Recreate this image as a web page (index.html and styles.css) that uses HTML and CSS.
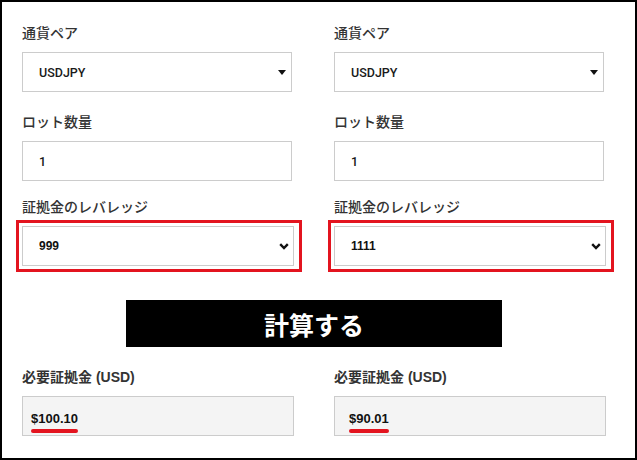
FILE: index.html
```html
<!DOCTYPE html>
<html lang="ja">
<head>
    <meta charset="UTF-8">
    <meta name="viewport" content="width=device-width, initial-scale=1.0">
    <title>証拠金計算</title>
    <link rel="stylesheet" href="styles.css">
</head>
<body>

    <div class="calc">
        <!-- 通貨ペア -->
        <div class="row">
            <div class="field">
                <label class="label">通貨ペア</label>
                <div class="select-wrap">
                    <select class="select"><option>USDJPY</option></select>
                    <svg class="arrow-tri" width="8" height="5" viewBox="0 0 8 5"><polygon points="0,0 8,0 4,5" fill="#111"/></svg>
                </div>
            </div>
            <div class="field">
                <label class="label">通貨ペア</label>
                <div class="select-wrap">
                    <select class="select"><option>USDJPY</option></select>
                    <svg class="arrow-tri" width="8" height="5" viewBox="0 0 8 5"><polygon points="0,0 8,0 4,5" fill="#111"/></svg>
                </div>
            </div>
        </div>

        <!-- ロット数量 -->
        <div class="row row-lot">
            <div class="field">
                <label class="label">ロット数量</label>
                <input class="input" type="text" value="1">
            </div>
            <div class="field">
                <label class="label">ロット数量</label>
                <input class="input" type="text" value="1">
            </div>
        </div>

        <!-- レバレッジ -->
        <div class="row row-leverage">
            <div class="field">
                <label class="label">証拠金のレバレッジ</label>
                <div class="highlight">
                    <div class="select-wrap">
                        <select class="select select-bold"><option>999</option></select>
                        <svg class="arrow-chev" width="10" height="7" viewBox="0 0 10 7"><polyline points="1.2,1.2 5,5 8.8,1.2" fill="none" stroke="#111" stroke-width="2.4"/></svg>
                    </div>
                </div>
            </div>
            <div class="field">
                <label class="label">証拠金のレバレッジ</label>
                <div class="highlight">
                    <div class="select-wrap">
                        <select class="select select-bold"><option>1111</option></select>
                        <svg class="arrow-chev" width="10" height="7" viewBox="0 0 10 7"><polyline points="1.2,1.2 5,5 8.8,1.2" fill="none" stroke="#111" stroke-width="2.4"/></svg>
                    </div>
                </div>
            </div>
        </div>

        <button class="button">計算する</button>

        <!-- 結果 -->
        <div class="row row-result">
            <div class="field">
                <label class="label label-strong">必要証拠金 (USD)</label>
                <div class="output"><span class="amount">$100.10</span></div>
            </div>
            <div class="field">
                <label class="label label-strong">必要証拠金 (USD)</label>
                <div class="output output-right"><span class="amount">$90.01</span></div>
            </div>
        </div>
    </div>

</body>
</html>
```

FILE: styles.css
```css
body {
    margin: 0;
    background-color: #fff;
    font-family: "Liberation Sans", "Noto Sans CJK JP", sans-serif;
}

/* 外枠 */
.calc {
    width: 637px;
    height: 460px;
    box-sizing: border-box;
    border: 2px solid #000;
    padding: 21px 29px 0 20px;
    overflow: hidden;
}

.row {
    display: grid;
    grid-template-columns: 272px 272px;
    column-gap: 40px;
}

.row-lot { margin-top: 20px; }
.row-leverage { margin-top: 16px; }
.row-result { margin-top: 20px; }

.label {
    display: block;
    font-size: 14px;
    line-height: 20px;
    font-weight: 500;
    color: #333;
    margin-bottom: 9px;
}

.label-strong {
    font-weight: bold;
}

.select-wrap {
    position: relative;
}

.select,
.input {
    display: block;
    width: 270px;
    height: 40px;
    box-sizing: border-box;
    margin: 0;
    padding: 0 0 0 16px;
    border: 1px solid #ccc;
    border-radius: 0;
    background-color: #fff;
    font-family: Roboto, sans-serif;
    font-weight: 500;
    font-size: 12.5px;
    color: #1a1a1a;
    appearance: none;
    -webkit-appearance: none;
    outline: none;
}

.select-bold {
    width: 272px;
    font-family: "Liberation Sans", sans-serif;
    font-weight: bold;
    font-size: 12px;
    color: #111;
}

.arrow-tri {
    position: absolute;
    right: 8px;
    top: 18px;
}

.arrow-chev {
    position: absolute;
    right: 5px;
    top: 17px;
}

/* 赤い枠 */
.highlight {
    border: 3px solid #e3141f;
    padding: 3px 5px 3px 3px;
    margin: -6px -8px -6px -6px;
}

.button {
    display: block;
    width: 376px;
    height: 47px;
    margin: 34px auto 0;
    padding: 0;
    border: none;
    background-color: #000;
    color: #fff;
    font-family: "Noto Sans CJK JP", sans-serif;
    font-weight: bold;
    font-size: 25px;
    cursor: pointer;
}

.output {
    height: 40px;
    box-sizing: border-box;
    border: 1px solid #ccc;
    background-color: #f4f4f4;
    padding: 12px 0 0 8px;
}

.output-right {
    padding-left: 14px;
}

.amount {
    display: inline-block;
    font-family: "Liberation Sans", sans-serif;
    font-weight: bold;
    font-size: 13px;
    line-height: 14px;
    color: #111;
}

.amount::after {
    content: "";
    display: block;
    height: 4px;
    margin-top: 3px;
    border-radius: 2px;
    background-color: #e3141f;
}
```
